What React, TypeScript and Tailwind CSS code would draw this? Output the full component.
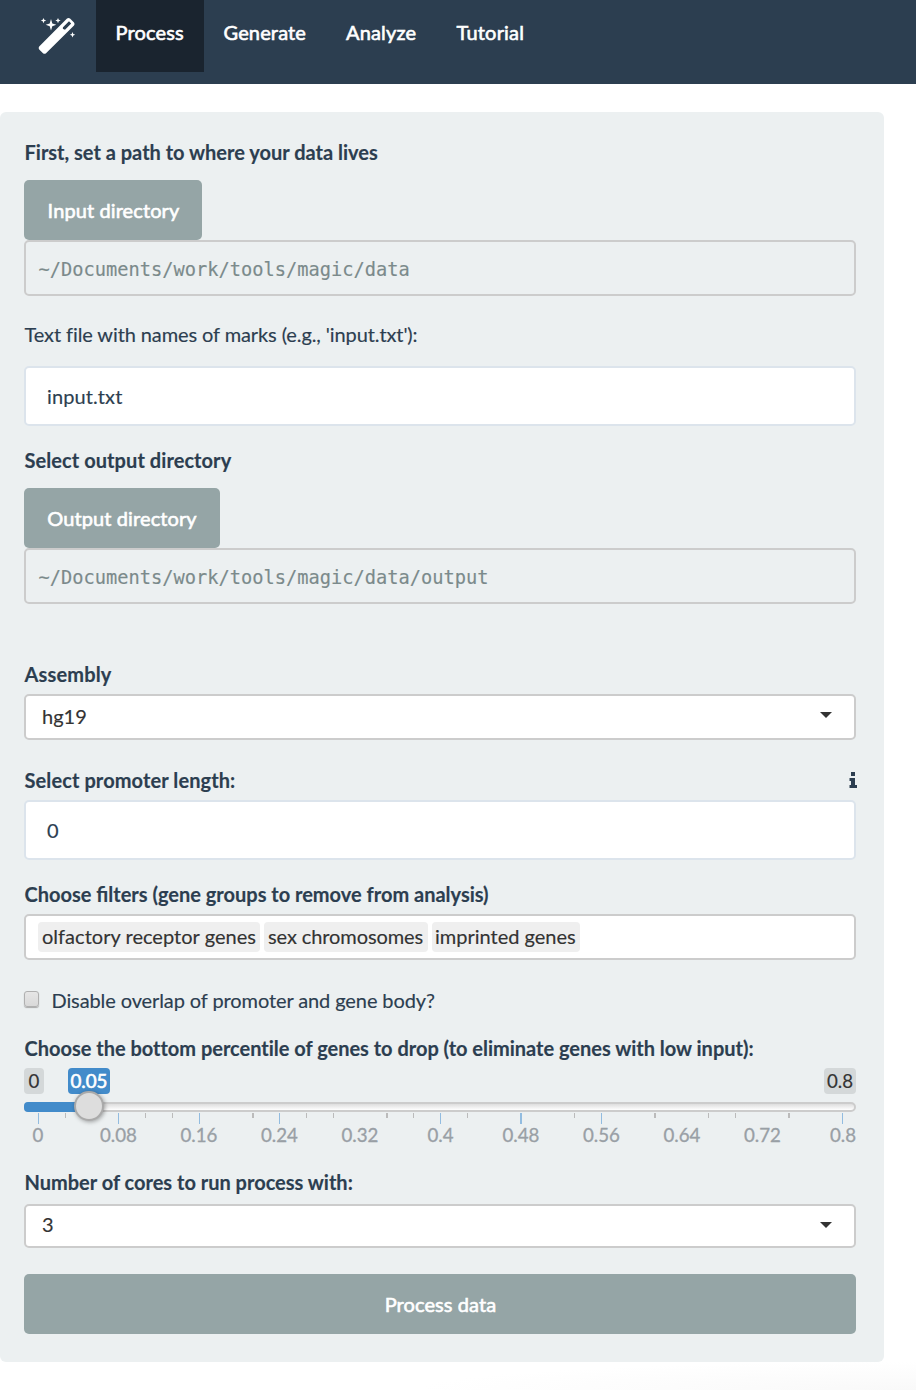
import React from "react";

const Label = ({ children, cls = "" }: { children: React.ReactNode; cls?: string }) => (
  <div className={"h-6 whitespace-nowrap leading-[22px] " + cls}>
    <span className="ml-[0.5px]">{children}</span>
  </div>
);

const majors = [38, 118, 199, 279, 440, 520, 601, 842];
const wideMajors = [520];
const minors = [65, 145, 172, 252, 306, 333, 386, 413, 467, 574, 654, 708, 735, 788];
const wideMinors = [252, 386, 654, 788];
const steps = ["0", "0.08", "0.16", "0.24", "0.32", "0.4", "0.48", "0.56", "0.64", "0.72", "0.8"];

function Caret({ cls }: { cls: string }) {
  return (
    <svg width="12" height="6" viewBox="0 0 12 6" className={"mr-[22px] " + cls}>
      <path d="M0 0H12L6 6Z" fill="#333" />
    </svg>
  );
}

export default function App() {
  return (
    <div className="flex h-[1390px] w-[916px] flex-col overflow-hidden bg-white text-[20px] text-[#2c3e50] [-webkit-text-stroke:0.15px_currentColor]" style={{ fontFamily: 'Lato, "Liberation Sans", sans-serif' }}>
      <nav className="flex h-[84px] shrink-0 bg-[#2c3e50] text-white [-webkit-text-stroke:0.6px_currentColor]">
        <div className="w-24 pl-[34px] pt-3">
          <svg width="46" height="46" viewBox="0 0 46 46" fill="#fff">
            <path fillRule="evenodd" d="M33 6.6Q34.5 5.4 36 6.6L40 10.4Q41.2 12 40 13.5L12 41.2Q10.5 42.4 9 41.2L5.2 37.6Q4 36 5.2 34.5ZM35 9.3L29 15.2Q28.4 16.2 29.2 17L31 17.8L37.2 11.6Z" />
            <path d="M17 7L18.3 11.4L22.3 12.8L18.3 14.2L17 18.5L15.7 14.2L11.7 12.8L15.7 11.4Z" />
            <path d="M9.5 6L10.3 7.8L12.2 8.5L10.3 9.3L9.5 11.2L8.7 9.3L6.8 8.5L8.7 7.8Z" />
            <path d="M24 6L24.8 7.8L26.7 8.5L24.8 9.3L24 11.2L23.2 9.3L21.3 8.5L23.2 7.8Z" />
            <path d="M38.5 20L39.3 21.9L41.2 22.7L39.3 23.5L38.5 25.4L37.7 23.5L35.8 22.7L37.7 21.9Z" />
          </svg>
        </div>
        <div className="h-[72px] w-[108px] bg-[#1a242f] pl-[19.5px] pt-5 leading-6 tracking-[0.15px]">Process</div>
        <div className="w-[122px] pl-[19.5px] pt-5 leading-6 tracking-[0.15px]">Generate</div>
        <div className="w-[110px] pl-5 pt-5 leading-6 tracking-[0.15px]">Analyze</div>
        <div className="pl-[20.5px] pt-5 leading-6 tracking-[0.2px]">Tutorial</div>
      </nav>

      <main className="mt-7 flex h-[1250px] w-[884px] shrink-0 flex-col rounded-[6px] bg-[#ecf0f1] pl-6 pr-7 pt-[29px]">
        <Label cls="font-bold">First, set a path to where your data lives</Label>
        <button className="mt-[15px] h-[60px] w-[178px] shrink-0 rounded-[5px] bg-[#95a5a6] pl-px tracking-[0.1px] text-white [-webkit-text-stroke:0.6px_currentColor]">Input directory</button>
        <div className="flex h-14 shrink-0 items-center rounded-[5px] border-2 border-[#ccc] pl-[12.5px] pt-1 font-['DejaVu_Sans_Mono',monospace] text-[18.7px] text-[#7b8a8b]">~/Documents/work/tools/magic/data</div>

        <Label cls="mt-[27px] tracking-[-0.1px]">Text file with names of marks (e.g., 'input.txt'):</Label>
        <div className="mt-[19px] flex h-[60px] shrink-0 items-center rounded-[5px] border-2 border-[#dce4ec] bg-white pl-[21px] tracking-[0.1px]">input.txt</div>

        <Label cls="mt-[23px] font-bold tracking-[0.07px]">Select output directory</Label>
        <button className="mt-[15px] h-[60px] w-[196px] shrink-0 rounded-[5px] bg-[#95a5a6] tracking-[0.1px] text-white [-webkit-text-stroke:0.6px_currentColor]">Output directory</button>
        <div className="flex h-14 shrink-0 items-center rounded-[5px] border-2 border-[#ccc] pl-[12.5px] pt-1 font-['DejaVu_Sans_Mono',monospace] text-[18.7px] text-[#7b8a8b]">~/Documents/work/tools/magic/data/output</div>

        <Label cls="mt-[59px] font-bold tracking-[0.15px]">Assembly</Label>
        <div className="mt-[7px] flex h-[46px] shrink-0 items-center justify-between rounded-[5px] border-2 border-[#ccc] bg-white pl-4 text-[#333]">
          <span className="-mt-0.5">hg19</span>
          <Caret cls="-mt-[5px]" />
        </div>

        <div className="mt-[29px] flex justify-between font-bold">
          <Label cls="tracking-[0.1px]">Select promoter length:</Label>
          <svg width="8" height="16" viewBox="0 0 8 16" className="-mr-px mt-[3px]" fill="#2c3e50">
            <path d="M2 0H6V4H2ZM0.5 6H6V13H8V16H0.5V13H2V9H0.5Z" />
          </svg>
        </div>
        <div className="mt-[7px] flex h-[60px] shrink-0 items-center rounded-[5px] border-2 border-[#dce4ec] bg-white pl-[21px]">0</div>

        <Label cls="mt-[23px] font-bold">Choose filters (gene groups to remove from analysis)</Label>
        <div className="mt-[7px] flex h-[46px] shrink-0 items-center gap-1 rounded-[5px] border-2 border-[#ccc] bg-white pl-3 text-[#333]">
          <span className="h-[30px] w-[222px] whitespace-nowrap rounded-[4px] bg-[#efefef] pl-1 leading-7 tracking-[0.03px]">olfactory receptor genes</span>
          <span className="h-[30px] w-[164px] whitespace-nowrap rounded-[4px] bg-[#efefef] pl-1 leading-7 tracking-[-0.1px]">sex chromosomes</span>
          <span className="h-[30px] w-[148px] whitespace-nowrap rounded-[4px] bg-[#efefef] pl-[3px] leading-7">imprinted genes</span>
        </div>

        <div className="mt-[29px] flex">
          <span className="mt-0.5 h-4 w-[15px] rounded-[3px] border border-[#b0b0b0] bg-linear-to-b from-[#e6e6e6] to-[#d9d9d9] shadow-[0_1px_1px_#aaa]" />
          <Label cls="ml-3 tracking-[-0.1px]">Disable overlap of promoter and gene body?</Label>
        </div>

        <Label cls="mt-6 font-bold tracking-[-0.012px]">Choose the bottom percentile of genes to drop (to eliminate genes with low input):</Label>
        <div className="mt-[7px] flex h-[26px] shrink-0 text-[18.7px] leading-[26px] text-[#333]">
          <span className="w-5 rounded-[4px] bg-[#d4d8d9] text-center">0</span>
          <span className="ml-6 w-[42px] rounded-[4px] bg-[#428bca] text-center text-white [-webkit-text-stroke:0.6px_currentColor]">0.05</span>
          <span className="ml-auto w-8 rounded-[4px] bg-[#d4d8d9] text-center">0.8</span>
        </div>
        <div className="relative mt-2 h-[10px] shrink-0 rounded-[5px] border-2 border-[#ccc] bg-linear-to-b from-[#dedede] to-white">
          <div className="absolute -left-0.5 -top-0.5 h-[10px] w-[64px] rounded-l-[4px] bg-[#428bca]" />
          <div className="absolute left-[48px] -top-[13px] size-[30px] rounded-full border-2 border-[#aaa] bg-[#ddd] shadow-[1px_1px_4px_rgba(0,0,0,0.35)]" />
        </div>
        <svg width="832" height="12" viewBox="24 0 832 12" className="mt-px shrink-0">
          {majors.map((x) => <rect key={x} x={x} y="0" width={wideMajors.includes(x) ? 2 : 1} height="11" fill="#92bce0" />)}
          {minors.map((x) => <rect key={x} x={x} y="0" width={wideMinors.includes(x) ? 2 : 1} height="5" fill="#bbb" />)}
        </svg>
        <div className="flex h-[23px] shrink-0 justify-between pl-[14px] pr-[13px] text-[18.7px] leading-[21px] text-[#999fa5] [-webkit-text-stroke:0.3px_currentColor]">
          {steps.map((s) => <span key={s} className="flex w-0 justify-center">{s}</span>)}
        </div>

        <Label cls="mt-[23px] font-bold">Number of cores to run process with:</Label>
        <div className="mt-[9px] flex h-11 shrink-0 items-center justify-between rounded-[5px] border-2 border-[#ccc] bg-white pl-4 text-[#333]">
          <span className="-mt-1">3</span>
          <Caret cls="-mt-[3px]" />
        </div>
        <button className="mt-[26px] h-[60px] shrink-0 rounded-[5px] bg-[#95a5a6] pl-px tracking-[0.1px] text-white [-webkit-text-stroke:0.6px_currentColor]">Process data</button>
      </main>
      <div className="ml-[400px] h-7 shrink-0 bg-[radial-gradient(ellipse_500px_28px_at_100%_100%,#f9f9f9,#ffffff)]" />
    </div>
  );
}
